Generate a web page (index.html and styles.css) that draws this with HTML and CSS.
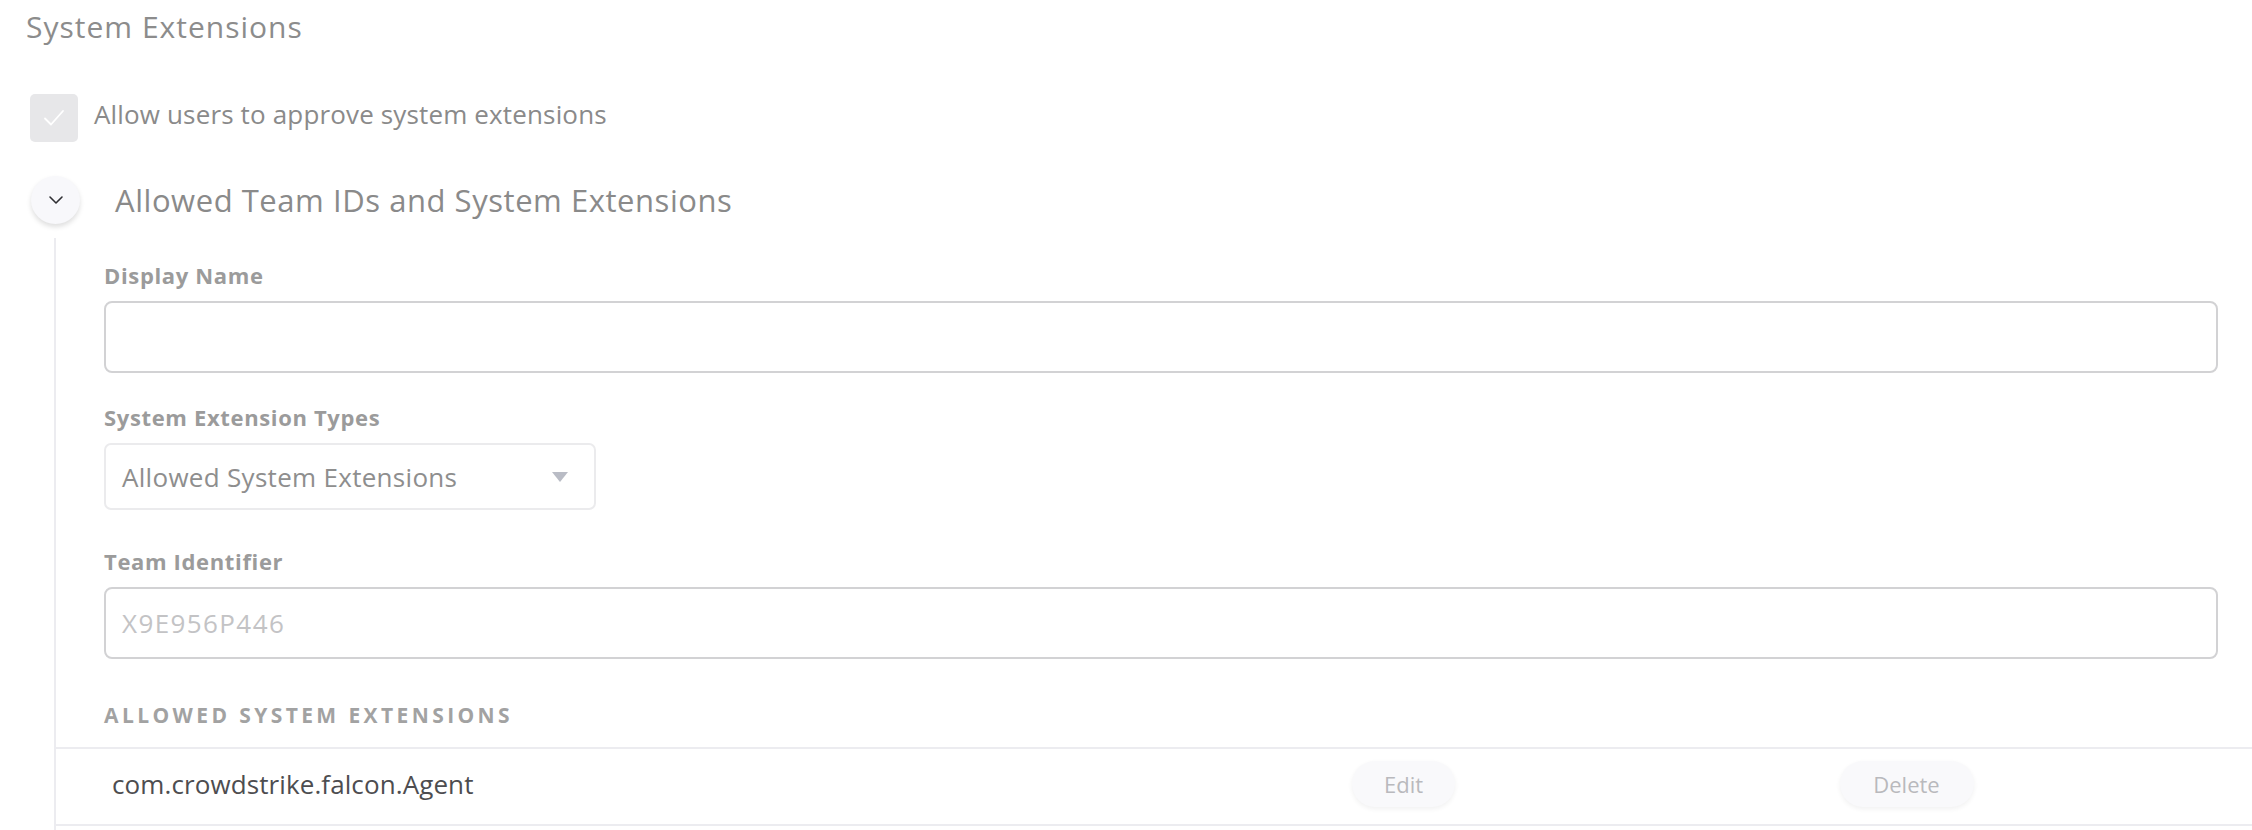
FILE: index.html
```html
<!DOCTYPE html>
<html lang="en">
<head>
<meta charset="utf-8">
<title>System Extensions</title>
<link rel="stylesheet" href="styles.css">
</head>
<body>
<div class="page">
  <h1 class="title">System Extensions</h1>

  <label class="check-row">
    <span class="checkbox">
      <svg width="24" height="20" viewBox="0 0 24 20"><polyline points="3,10.5 9,16.5 21,3" fill="none" stroke="#ffffff" stroke-width="1.8" stroke-linecap="round" stroke-linejoin="round"/></svg>
    </span>
    <span class="check-label">Allow users to approve system extensions</span>
  </label>

  <section class="group">
    <div class="group-head">
      <span class="toggle">
        <svg width="16" height="10" viewBox="0 0 16 10"><polyline points="2,2 8,8 14,2" fill="none" stroke="#2f2f33" stroke-width="1.6" stroke-linecap="round" stroke-linejoin="round"/></svg>
      </span>
      <h2 class="group-title">Allowed Team IDs and System Extensions</h2>
    </div>

    <div class="group-body">
      <div class="fields">
        <div class="field">
          <div class="field-label">Display Name</div>
          <div class="input"></div>
        </div>
        <div class="field">
          <div class="field-label">System Extension Types</div>
          <div class="select">
            <span class="select-text">Allowed System Extensions</span>
            <span class="caret"></span>
          </div>
        </div>
        <div class="field field-team">
          <div class="field-label">Team Identifier</div>
          <div class="input"><span class="placeholder">X9E956P446</span></div>
        </div>
        <div class="list-heading">ALLOWED SYSTEM EXTENSIONS</div>
      </div>

      <div class="list">
        <div class="list-row">
          <span class="ext-name">com.crowdstrike.falcon.Agent</span>
          <span class="cell"><span class="pill pill-edit">Edit</span></span>
          <span class="cell"><span class="pill pill-delete">Delete</span></span>
        </div>
      </div>
    </div>
  </section>
</div>
</body>
</html>
```

FILE: styles.css
```css
* { box-sizing: border-box; }

html, body {
  margin: 0;
  padding: 0;
  background: #ffffff;
}

body {
  font-family: "Open Sans", Lato, sans-serif;
  color: #8a8a8a;
  overflow: hidden;
  height: 830px;
}

.page {
  padding: 0;
}

.title {
  margin: 0;
  padding: 9px 0 0 26px;
  font-size: 30px;
  letter-spacing: 1px;
  font-weight: 400;
  line-height: 36px;
  color: #8c8c8c;
}

.check-row {
  display: flex;
  align-items: center;
  gap: 16px;
  margin: 49px 0 0 30px;
  height: 48px;
}

.checkbox {
  width: 48px;
  height: 48px;
  border-radius: 5px;
  background: #e7e7e9;
  display: flex;
  align-items: center;
  justify-content: center;
}

.check-label {
  font-size: 26px;
  letter-spacing: 0.15px;
  color: #8a8a8a;
  padding-bottom: 8px;
}

.group-head {
  display: flex;
  align-items: center;
  margin: 34px 0 0 31px;
  height: 48px;
}

.toggle {
  width: 49px;
  height: 48px;
  border-radius: 50%;
  background: #f8f8fb;
  box-shadow: 0 3px 5px rgba(0, 0, 0, 0.13);
  display: flex;
  align-items: center;
  justify-content: center;
}

.group-title {
  margin: 0 0 0 35px;
  font-size: 31px;
  letter-spacing: 0.55px;
  font-weight: 400;
  color: #8a8a8a;
}

.group-body {
  margin: 14px 0 0 54px;
  border-left: 2px solid #ececf0;
  padding-top: 20px;
  padding-bottom: 40px;
}

.fields {
  padding: 0 34px 0 48px;
}

.field {
  padding-top: 4px;
}

.field + .field {
  margin-top: 27px;
}

.field-team {
  margin-top: 34px !important;
}

.field-label {
  font-size: 22px;
  letter-spacing: 0.65px;
  font-weight: 700;
  color: #9b9b9b;
  line-height: 26px;
  margin-bottom: 13px;
}

.input {
  height: 72px;
  border: 2px solid #d2d2d4;
  border-radius: 8px;
  display: flex;
  align-items: center;
  padding-left: 16px;
}

.placeholder {
  font-size: 26px;
  letter-spacing: 1.4px;
  color: #c3c3c5;
}

.select {
  width: 492px;
  height: 67px;
  border: 2px solid #ebebed;
  border-radius: 7px;
  display: flex;
  align-items: center;
  justify-content: space-between;
  padding: 0 26px 0 16px;
}

.select-text {
  font-size: 26px;
  letter-spacing: 0.3px;
  color: #8e8e8e;
}

.caret {
  width: 0;
  height: 0;
  border-left: 8px solid transparent;
  border-right: 8px solid transparent;
  border-top: 10px solid #b9bcc5;
}

.list-heading {
  margin-top: 43px;
  font-size: 21px;
  font-weight: 700;
  letter-spacing: 3.4px;
  color: #a2a2a2;
  line-height: 26px;
  padding-bottom: 19px;
}

.list-row {
  display: grid;
  grid-template-columns: 1fr 503px 503px;
  align-items: center;
  height: 79px;
  border-top: 2px solid #ececf0;
  border-bottom: 2px solid #ececf0;
  padding: 0 94px 5px 56px;
}

.ext-name {
  font-size: 26px;
  letter-spacing: 0.1px;
  color: #4d4d50;
}

.cell {
  display: flex;
  justify-content: center;
}

.pill {
  display: inline-flex;
  align-items: center;
  justify-content: center;
  height: 46px;
  border-radius: 23px;
  background: #f9f9fb;
  box-shadow: 0 2px 5px rgba(0, 0, 0, 0.06);
  font-size: 22px;
  color: #b9b9bd;
}

.pill-edit {
  width: 103px;
}

.pill-delete {
  width: 134px;
}
```
